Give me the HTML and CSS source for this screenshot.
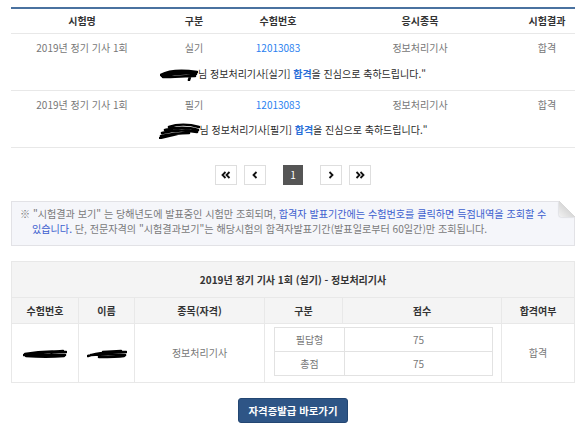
FILE: index.html
```html
<!DOCTYPE html>
<html lang="ko">
<head>
<meta charset="utf-8">
<title>시험결과</title>
<link rel="stylesheet" href="styles.css">
</head>
<body>
<div class="page">
  <table class="result">
    <colgroup>
      <col class="c1"><col class="c2"><col class="c3"><col class="c4"><col class="c5">
    </colgroup>
    <thead>
      <tr><th>시험명</th><th>구분</th><th>수험번호</th><th>응시종목</th><th>시험결과</th></tr>
    </thead>
    <tbody>
      <tr class="data"><td>2019년 정기 기사 1회</td><td>실기</td><td><a class="num">12013083</a></td><td>정보처리기사</td><td>합격</td></tr>
      <tr class="msg"><td colspan="5"><svg class="scr" width="38" height="12" viewBox="0 0 38 12"><path d="M1 6 C8 2 22 1 37 3 M2 7 C12 5 25 4 36 5 M3 8 C14 8 26 7 35 7 M8 4 L30 3 M31 5 L29 11" fill="none" stroke="#000" stroke-width="2.6" stroke-linecap="round"/></svg>님 정보처리기사[실기] <b class="pass">합격</b>을 진심으로 축하드립니다."</td></tr>
      <tr class="data"><td>2019년 정기 기사 1회</td><td>필기</td><td><a class="num">12013083</a></td><td>정보처리기사</td><td>합격</td></tr>
      <tr class="msg"><td colspan="5"><svg class="scr" width="41" height="16" viewBox="0 0 41 16"><path d="M10 4 C18 1 30 1 40 4 M6 7 C16 4 30 4 39 7 M3 10 C14 7 28 7 38 9 M2 13 C12 11 22 10 30 10 M1 15 L18 11" fill="none" stroke="#000" stroke-width="2.6" stroke-linecap="round"/></svg>님 정보처리기사[필기] <b class="pass">합격</b>을 진심으로 축하드립니다."</td></tr>
    </tbody>
  </table>

  <div class="pager">
    <div class="pgroup">
      <span class="pbtn"><svg width="10" height="8" viewBox="0 0 10 8"><path d="M4.5 1 L1.5 4 L4.5 7 M8.5 1 L5.5 4 L8.5 7" fill="none" stroke="#111" stroke-width="1.8"/></svg></span>
      <span class="pbtn"><svg width="6" height="8" viewBox="0 0 6 8"><path d="M4.5 1 L1.5 4 L4.5 7" fill="none" stroke="#111" stroke-width="1.8"/></svg></span>
    </div>
    <div class="pgroup">
      <span class="pbtn cur">1</span>
    </div>
    <div class="pgroup">
      <span class="pbtn"><svg width="6" height="8" viewBox="0 0 6 8"><path d="M1.5 1 L4.5 4 L1.5 7" fill="none" stroke="#111" stroke-width="1.8"/></svg></span>
      <span class="pbtn"><svg width="10" height="8" viewBox="0 0 10 8"><path d="M1.5 1 L4.5 4 L1.5 7 M5.5 1 L8.5 4 L5.5 7" fill="none" stroke="#111" stroke-width="1.8"/></svg></span>
    </div>
  </div>

  <div class="notice">
    <p>※ "시험결과 보기" 는 당해년도에 발표중인 시험만 조회되며, <span class="hl">합격자 발표기간에는 수험번호를 클릭하면 득점내역을 조회할 수</span><br><span class="hl">있습니다.</span> 단, 전문자격의 "시험결과보기"는 해당시험의 합격자발표기간(발표일로부터 60일간)만 조회됩니다.</p>
  </div>

  <table class="detail">
    <colgroup>
      <col class="d1"><col class="d2"><col class="d3"><col class="d4"><col class="d5"><col class="d6">
    </colgroup>
    <thead>
      <tr class="title"><th colspan="6">2019년 정기 기사 1회 (실기) - 정보처리기사</th></tr>
      <tr class="head"><th>수험번호</th><th>이름</th><th>종목(자격)</th><th>구분</th><th>점수</th><th>합격여부</th></tr>
    </thead>
    <tbody>
      <tr>
        <td><svg class="scr" width="44" height="10" viewBox="0 0 44 10"><path d="M2 5 C12 3 30 2 43 3 M1 6 C14 5 30 5 42 6 M3 7 C16 8 30 8 41 7 M28 3 L40 2" fill="none" stroke="#000" stroke-width="2.6" stroke-linecap="round"/></svg></td>
        <td><svg class="scr" width="40" height="10" viewBox="0 0 40 10"><path d="M1 7 C10 4 26 2 39 3 M4 6 C14 5 28 5 38 6 M12 8 C22 8 30 8 37 7 M16 3 L34 2" fill="none" stroke="#000" stroke-width="2.6" stroke-linecap="round"/></svg></td>
        <td>정보처리기사</td>
        <td colspan="2" class="scorecell">
          <table class="score">
            <colgroup><col class="s1"><col class="s2"></colgroup>
            <tr><td>필답형</td><td>75</td></tr>
            <tr><td>총점</td><td>75</td></tr>
          </table>
        </td>
        <td>합격</td>
      </tr>
    </tbody>
  </table>

  <div class="actions">
    <a class="btn">자격증발급 바로가기</a>
  </div>
</div>
</body>
</html>
```

FILE: styles.css
```css
* { box-sizing: border-box; }
body {
  margin: 0;
  background: #fff;
  font-family: "Noto Sans CJK KR", "Noto Sans", sans-serif;
  font-size: 10px;
  color: #777;
}
.page {
  width: 580px;
  padding: 7px 5px 0 11px;
}

/* result list */
.result {
  width: 564px;
  border-collapse: collapse;
  table-layout: fixed;
  border-top: 2px solid #4a72a0;
}
.result .c1 { width: 142px; }
.result .c2 { width: 82px; }
.result .c3 { width: 86px; }
.result .c4 { width: 198px; }
.result .c5 { width: 56px; }
.result th {
  height: 25px;
  padding: 0;
  font-weight: bold;
  color: #333;
  border-bottom: 1px solid #e8e8e8;
  text-align: center;
}
.result td {
  padding: 0;
  text-align: center;
  line-height: 14px;
}
.result .data td { height: 28px; padding-top: 1px; }
.result .msg td {
  height: 29px;
  color: #2a2a2a;
  border-bottom: 1px solid #e8e8e8;
  padding-bottom: 2px;
}
.num { color: #2a7ff0; }
.pass { color: #2a6fd8; }
.scr { vertical-align: middle; }

/* pager */
.pager {
  display: flex;
  justify-content: center;
  gap: 17px;
  margin-top: 17px;
}
.pgroup { display: flex; gap: 7px; }
.pbtn {
  width: 22px;
  height: 20px;
  border: 1px solid #dedede;
  background: #fff;
  display: flex;
  align-items: center;
  justify-content: center;
}
.pbtn.cur {
  width: 20px;
  background: #555;
  border-color: #555;
  color: #fff;
  font-size: 10px;
}

/* notice */
.notice {
  position: relative;
  margin-top: 16px;
  width: 564px;
  border: 1px solid #e2e2e6;
  background: #f5f6fa;
  padding: 4px 8px 9px 8px;
  line-height: 15px;
  font-size: 10.1px;
  color: #7a7a7a;
}
.notice p {
  margin: 0;
  padding-left: 12px;
  text-indent: -12px;
  white-space: nowrap;
}
.notice .hl { color: #3d5fcf; }
.notice::after {
  content: "";
  position: absolute;
  top: -1px;
  right: -1px;
  width: 16px;
  height: 16px;
  background: linear-gradient(225deg, #fff 50%, #d8d8d8 50%, #f2f2f2 100%);
  border-bottom-left-radius: 4px;
  box-shadow: -1px 1px 1px rgba(0,0,0,0.08);
}

/* detail */
.detail {
  margin-top: 15px;
  width: 563px;
  border-collapse: collapse;
  table-layout: fixed;
  border: 1px solid #e8e8e8;
}
.detail .d1 { width: 67px; }
.detail .d2 { width: 56px; }
.detail .d3 { width: 130px; }
.detail .d4 { width: 78px; }
.detail .d5 { width: 159px; }
.detail .d6 { width: 73px; }
.detail th {
  padding: 0;
  background: #f4f4f4;
  color: #333;
  font-weight: bold;
  text-align: center;
}
.detail .title th {
  height: 36px;
  border-bottom: 1px solid #e8e8e8;
}
.detail .head th {
  height: 26px;
  border: 1px solid #e8e8e8;
}
.detail td {
  height: 58px;
  padding: 0;
  border: 1px solid #e8e8e8;
  text-align: center;
}
.detail .scorecell {
  padding: 3px 8px 6px 9px;
  vertical-align: top;
}
.score {
  width: 100%;
  border-collapse: collapse;
  table-layout: fixed;
}
.score .s1 { width: 70px; }
.score td {
  height: 24px;
  border: 1px solid #e2e2e2;
  color: #777;
}

/* button */
.actions {
  display: flex;
  justify-content: center;
  width: 564px;
  margin-top: 15px;
}
.btn {
  width: 110px;
  height: 25px;
  display: flex;
  align-items: center;
  justify-content: center;
  background: #2e5586;
  border: 1px solid #234672;
  border-radius: 3px;
  color: #fff;
  font-weight: bold;
  font-size: 10.4px;
}
```
